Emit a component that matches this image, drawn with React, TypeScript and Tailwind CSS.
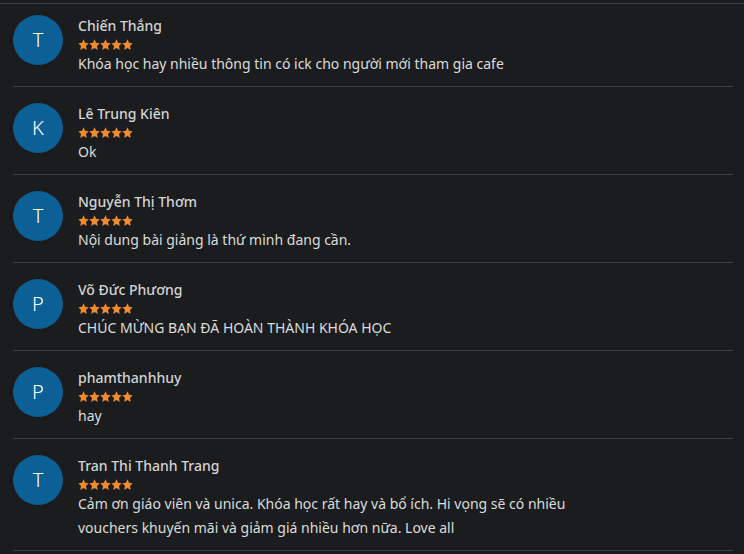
const reviews = [
  { initial: "T", name: "Chiến Thắng", text: "Khóa học hay nhiều thông tin có ick cho người mới tham gia cafe" },
  { initial: "K", name: "Lê Trung Kiên", text: "Ok" },
  { initial: "T", name: "Nguyễn Thị Thơm", text: "Nội dung bài giảng là thứ mình đang cần." },
  { initial: "P", name: "Võ Đức Phương", text: "CHÚC MỪNG BẠN ĐÃ HOÀN THÀNH KHÓA HỌC" },
  { initial: "P", name: "phamthanhhuy", text: "hay" },
  {
    initial: "T",
    name: "Tran Thi Thanh Trang",
    text: "Cảm ơn giáo viên và unica. Khóa học rất hay và bổ ích. Hi vọng sẽ có nhiều vouchers khuyến mãi và giảm giá nhiều hơn nữa. Love all",
  },
];

function Star() {
  return (
    <svg viewBox="0 0 24 24" className="h-[12px] w-[11px]" fill="#f28a2e" preserveAspectRatio="none">
      <path d="M12 0.5l3.4 7.2 7.9.9-5.8 5.3 1.6 7.9L12 17.9l-7.1 3.9 1.6-7.9L.7 8.6l7.9-.9z" />
    </svg>
  );
}

export default function App() {
  return (
    <div className="min-h-[554px] bg-[#1b1c1e] pt-[3px] font-['Noto_Sans','Open_Sans',sans-serif]">
      <div className="border-t border-[#3d3d3f]">
        {reviews.map((r, i) => (
          <div
            key={i}
            className={`ml-[13px] mr-[11px] flex gap-[15px] border-b border-[#3d3d3f] pb-[10px] ${i === 0 ? "pt-[10px]" : "pt-[15px]"}`}
          >
            <div className="mt-[1px] flex h-[50px] w-[50px] shrink-0 items-center justify-center rounded-full bg-[#0b6095] text-[20px] font-light text-white">
              {r.initial}
            </div>
            <div className="min-w-0 pt-[2px]">
              <p className="text-[14px] leading-5 font-medium text-[#d4d4d4]">{r.name}</p>
              <div className="flex h-[15px] items-end">
                {[0, 1, 2, 3, 4].map((s) => (
                  <Star key={s} />
                ))}
              </div>
              <p className="mt-[1px] max-w-[500px] text-[14px] leading-6 text-[#dcdcdc]">{r.text}</p>
            </div>
          </div>
        ))}
      </div>
    </div>
  );
}
